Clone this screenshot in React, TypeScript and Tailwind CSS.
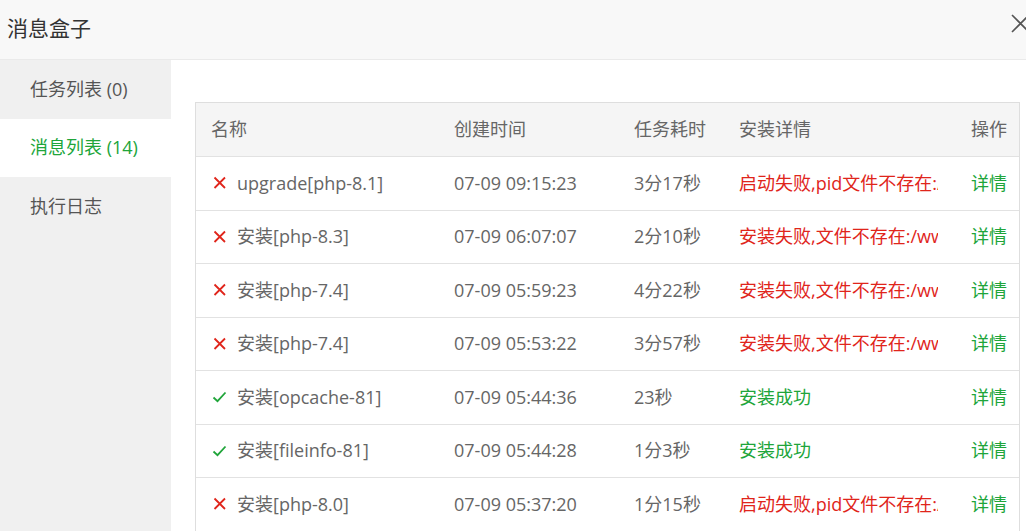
import React from "react";

type Row = { ok: boolean; name: string; time: string; dur: string; detail: string };

const rows: Row[] = [
  { ok: false, name: "upgrade[php-8.1]", time: "07-09 09:15:23", dur: "3分17秒", detail: "启动失败,pid文件不存在:/" },
  { ok: false, name: "安装[php-8.3]", time: "07-09 06:07:07", dur: "2分10秒", detail: "安装失败,文件不存在:/ww" },
  { ok: false, name: "安装[php-7.4]", time: "07-09 05:59:23", dur: "4分22秒", detail: "安装失败,文件不存在:/ww" },
  { ok: false, name: "安装[php-7.4]", time: "07-09 05:53:22", dur: "3分57秒", detail: "安装失败,文件不存在:/ww" },
  { ok: true, name: "安装[opcache-81]", time: "07-09 05:44:36", dur: "23秒", detail: "安装成功" },
  { ok: true, name: "安装[fileinfo-81]", time: "07-09 05:44:28", dur: "1分3秒", detail: "安装成功" },
  { ok: false, name: "安装[php-8.0]", time: "07-09 05:37:20", dur: "1分15秒", detail: "启动失败,pid文件不存在:/" },
];

const font = { fontFamily: '"Open Sans", "Noto Sans CJK SC", sans-serif' };

function XIcon() {
  return (
    <svg width="18" height="18" viewBox="0 0 18 18" className="shrink-0">
      <path d="M3.5 3.5 L14 14 M14 3.5 L3.5 14" stroke="#e0251b" strokeWidth="1.8" fill="none" />
    </svg>
  );
}

function CheckIcon() {
  return (
    <svg width="18" height="18" viewBox="0 0 18 18" className="shrink-0">
      <path d="M2.5 9.5 L6.5 13.2 L14.5 4.5" stroke="#20a53a" strokeWidth="1.8" fill="none" />
    </svg>
  );
}

export default function App() {
  return (
    <div className="w-[1026px] h-[531px] overflow-hidden bg-white flex flex-col" style={font}>
      <div className="h-[60px] shrink-0 bg-[#f8f8f8] border-b border-[#eaeaea] flex items-center pb-[3px] pl-[7px] relative">
        <span className="text-[21px] text-[#333] leading-none">消息盒子</span>
        <svg width="20" height="20" viewBox="0 0 20 20" className="absolute left-[1011px] top-[14px]">
          <path d="M1 1 L18 18 M18 1 L1 18" stroke="#555" strokeWidth="1.6" fill="none" />
        </svg>
      </div>
      <div className="flex flex-1 min-h-0">
        <div className="w-[171px] shrink-0 bg-[#f0f0f0] flex flex-col text-[18px]">
          <div className="h-[58.5px] flex items-center pl-[30px] text-[#555]">任务列表 (0)</div>
          <div className="h-[58.5px] flex items-center pl-[30px] text-[#20a53a] bg-white">消息列表 (14)</div>
          <div className="h-[58.5px] flex items-center pl-[30px] text-[#555]">执行日志</div>
        </div>
        <div className="flex-1 pl-[24px] pt-[42px]">
          <div className="w-[825px] border-l border-t border-r border-[#dedede] text-[18px] text-[#666]">
            <div className="grid grid-cols-[243px_180px_105px_229px_1fr] h-[53px] items-center bg-[#f5f5f5]">
              <div className="pl-[15px]">名称</div>
              <div className="pl-[15px]">创建时间</div>
              <div className="pl-[15px]">任务耗时</div>
              <div className="pl-[15px]">安装详情</div>
              <div className="pr-[12px] text-right">操作</div>
            </div>
            {rows.map((r, i) => (
              <div
                key={i}
                className="grid grid-cols-[243px_180px_105px_229px_1fr] h-[53.5px] items-center border-t border-[#e2e2e2]"
              >
                <div className="pl-[15px] flex items-center gap-[8px] whitespace-nowrap">
                  {r.ok ? <CheckIcon /> : <XIcon />}
                  <span>{r.name}</span>
                </div>
                <div className="pl-[15px] whitespace-nowrap">{r.time}</div>
                <div className="pl-[15px] whitespace-nowrap">{r.dur}</div>
                <div className="px-[15px] overflow-hidden">
                  <div className={`overflow-hidden whitespace-nowrap ${r.ok ? "text-[#20a53a]" : "text-[#e0251b]"}`}>{r.detail}</div>
                </div>
                <div className="pr-[12px] text-right text-[#20a53a]">详情</div>
              </div>
            ))}
          </div>
        </div>
      </div>
    </div>
  );
}
